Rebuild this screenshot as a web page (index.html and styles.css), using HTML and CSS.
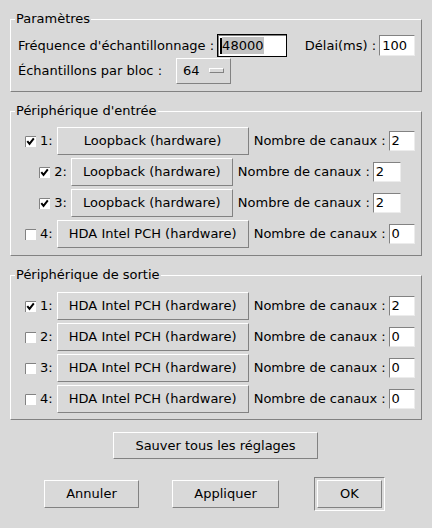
FILE: index.html
```html
<!DOCTYPE html>
<html lang="fr">
<head>
<meta charset="utf-8">
<title>Paramètres</title>
<link rel="stylesheet" href="styles.css">
</head>
<body>
<div class="dialog">
  <section class="group group-params">
    <span class="group-title">Paramètres</span>
    <div class="prow">
      <span class="lbl">Fréquence d'échantillonnage :</span>
      <span class="entry entry-focus entry-rate"><span class="cursor"></span><span class="sel">48000</span></span>
      <span class="lbl lbl-delay">Délai(ms) :</span>
      <span class="entry entry-delay">100</span>
    </div>
    <div class="prow prow-2">
      <span class="lbl">Échantillons par bloc :</span>
      <span class="menubtn">64<span class="indicator"></span></span>
    </div>
  </section>

  <section class="group group-dev group-in">
    <span class="group-title">Périphérique d'entrée</span>
    <div class="drow">
      <svg class="chk" viewBox="0 0 11 11"><rect x="0" y="0" width="11" height="11" fill="#fff"/><path d="M0.5 11V0.5H11" fill="none" stroke="#828282"/><path d="M2.3 5.2L4.5 7.8L8.8 2.4" fill="none" stroke="#000" stroke-width="2"/></svg>
      <span class="num">1:</span>
      <span class="btn dev-btn wide">Loopback (hardware)</span>
      <span class="lbl nb">Nombre de canaux :</span>
      <span class="entry ch">2</span>
    </div>
    <div class="drow">
      <svg class="chk" viewBox="0 0 11 11"><rect x="0" y="0" width="11" height="11" fill="#fff"/><path d="M0.5 11V0.5H11" fill="none" stroke="#828282"/><path d="M2.3 5.2L4.5 7.8L8.8 2.4" fill="none" stroke="#000" stroke-width="2"/></svg>
      <span class="num">2:</span>
      <span class="btn dev-btn narrow">Loopback (hardware)</span>
      <span class="lbl nb">Nombre de canaux :</span>
      <span class="entry ch">2</span>
    </div>
    <div class="drow">
      <svg class="chk" viewBox="0 0 11 11"><rect x="0" y="0" width="11" height="11" fill="#fff"/><path d="M0.5 11V0.5H11" fill="none" stroke="#828282"/><path d="M2.3 5.2L4.5 7.8L8.8 2.4" fill="none" stroke="#000" stroke-width="2"/></svg>
      <span class="num">3:</span>
      <span class="btn dev-btn narrow">Loopback (hardware)</span>
      <span class="lbl nb">Nombre de canaux :</span>
      <span class="entry ch">2</span>
    </div>
    <div class="drow">
      <svg class="chk" viewBox="0 0 11 11"><rect x="0" y="0" width="11" height="11" fill="#fff"/><path d="M0.5 11V0.5H11" fill="none" stroke="#828282"/></svg>
      <span class="num">4:</span>
      <span class="btn dev-btn wide">HDA Intel PCH (hardware)</span>
      <span class="lbl nb">Nombre de canaux :</span>
      <span class="entry ch">0</span>
    </div>
  </section>

  <section class="group group-dev group-out">
    <span class="group-title">Périphérique de sortie</span>
    <div class="drow">
      <svg class="chk" viewBox="0 0 11 11"><rect x="0" y="0" width="11" height="11" fill="#fff"/><path d="M0.5 11V0.5H11" fill="none" stroke="#828282"/><path d="M2.3 5.2L4.5 7.8L8.8 2.4" fill="none" stroke="#000" stroke-width="2"/></svg>
      <span class="num">1:</span>
      <span class="btn dev-btn wide">HDA Intel PCH (hardware)</span>
      <span class="lbl nb">Nombre de canaux :</span>
      <span class="entry ch">2</span>
    </div>
    <div class="drow">
      <svg class="chk" viewBox="0 0 11 11"><rect x="0" y="0" width="11" height="11" fill="#fff"/><path d="M0.5 11V0.5H11" fill="none" stroke="#828282"/></svg>
      <span class="num">2:</span>
      <span class="btn dev-btn wide">HDA Intel PCH (hardware)</span>
      <span class="lbl nb">Nombre de canaux :</span>
      <span class="entry ch">0</span>
    </div>
    <div class="drow">
      <svg class="chk" viewBox="0 0 11 11"><rect x="0" y="0" width="11" height="11" fill="#fff"/><path d="M0.5 11V0.5H11" fill="none" stroke="#828282"/></svg>
      <span class="num">3:</span>
      <span class="btn dev-btn wide">HDA Intel PCH (hardware)</span>
      <span class="lbl nb">Nombre de canaux :</span>
      <span class="entry ch">0</span>
    </div>
    <div class="drow">
      <svg class="chk" viewBox="0 0 11 11"><rect x="0" y="0" width="11" height="11" fill="#fff"/><path d="M0.5 11V0.5H11" fill="none" stroke="#828282"/></svg>
      <span class="num">4:</span>
      <span class="btn dev-btn wide">HDA Intel PCH (hardware)</span>
      <span class="lbl nb">Nombre de canaux :</span>
      <span class="entry ch">0</span>
    </div>
  </section>

  <div class="save-row">
    <span class="btn save-btn">Sauver tous les réglages</span>
  </div>

  <div class="actions">
    <span class="btn act-cancel">Annuler</span>
    <span class="btn act-apply">Appliquer</span>
    <span class="default-ring"><span class="btn act-ok">OK</span></span>
  </div>
</div>
</body>
</html>
```

FILE: styles.css
```css
* {
  box-sizing: border-box;
}

html, body {
  margin: 0;
  padding: 0;
}

body {
  width: 432px;
  height: 528px;
  overflow: hidden;
  background: #d9d9d9;
  color: #000;
  font-family: "DejaVu Sans", sans-serif;
  font-size: 13px;
  line-height: 16px;
}

.dialog {
  padding: 19px 10px 0;
}

/* Labelled frames */
.group {
  position: relative;
  border: 1px solid;
  border-color: #fff #828282 #828282 #fff;
}

.group + .group {
  margin-top: 19px;
}

.group-title {
  position: absolute;
  top: -9px;
  left: 4px;
  padding: 0 1px;
  background: #d9d9d9;
  line-height: 16px;
  white-space: nowrap;
}

.group-params {
  padding: 14px 6px 7px 7px;
}

.group-in {
  padding: 15px 6px 7px 14px;
}

.group-out {
  padding: 16px 6px 6px 14px;
}

/* Parameter rows */
.prow {
  display: flex;
  align-items: center;
  height: 23px;
}

.prow-2 {
  margin-top: 1px;
  height: 26px;
}

.lbl {
  white-space: nowrap;
}

.lbl-delay {
  margin-left: 18px;
}

/* Entries */
.entry {
  display: flex;
  align-items: center;
  background: #fff;
  border: 1px solid;
  border-color: #828282 #ececec #ececec #828282;
  padding-left: 2px;
  white-space: nowrap;
}

.entry-rate {
  margin-left: 3px;
  width: 70px;
  height: 23px;
  border: 1px solid #000;
  box-shadow: inset 1px 1px 0 #828282;
  padding-left: 2px;
}

.cursor {
  width: 2px;
  height: 16px;
  background: #000;
}

.sel {
  background: #c3c3c3;
  line-height: 17px;
  padding-right: 1px;
}

.entry-delay {
  margin-left: 3px;
  width: 36px;
  height: 21px;
}

/* Menubutton */
.menubtn {
  display: flex;
  align-items: center;
  margin-left: 14px;
  width: 55px;
  height: 26px;
  padding: 0 6px 0 6px;
  border: 1px solid;
  border-color: #fff #828282 #828282 #fff;
}

.indicator {
  margin-left: auto;
  margin-top: -2px;
  width: 15px;
  height: 5px;
  border: 1px solid;
  border-color: #fff #828282 #828282 #fff;
}

/* Device rows */
.drow {
  display: flex;
  align-items: center;
  justify-content: center;
  height: 28px;
}

.drow + .drow {
  margin-top: 3px;
}

.chk {
  width: 11px;
  height: 11px;
  flex: none;
  margin-top: 1px;
}

.num {
  margin-left: 4px;
  white-space: nowrap;
}

.btn {
  display: flex;
  align-items: center;
  justify-content: center;
  background: #d9d9d9;
  border: 1px solid;
  border-color: #fff #828282 #828282 #fff;
  white-space: nowrap;
  flex: none;
}

.dev-btn {
  margin-left: 4px;
  height: 28px;
}

.wide {
  width: 192px;
}

.narrow {
  width: 162px;
}

.nb {
  margin-left: 5px;
}

.ch {
  margin-left: 3px;
  width: 28px;
  height: 20px;
}

/* Save button */
.save-row {
  display: flex;
  justify-content: center;
  margin-top: 12px;
}

.save-btn {
  width: 205px;
  height: 27px;
  margin-left: -1px;
}

/* Bottom actions */
.actions {
  display: flex;
  align-items: center;
  margin-top: 18px;
  padding-left: 34px;
}

.act-cancel {
  width: 95px;
  height: 28px;
}

.act-apply {
  width: 107px;
  height: 28px;
  margin-left: 33px;
}

.default-ring {
  margin-left: 35px;
  padding: 2px;
  border: 1px solid;
  border-color: #828282 #fff #fff #828282;
}

.act-ok {
  width: 65px;
  height: 28px;
}
```
